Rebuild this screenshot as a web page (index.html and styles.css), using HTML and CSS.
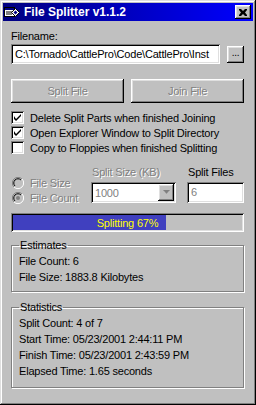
FILE: index.html
```html
<!DOCTYPE html>
<html lang="en">
<head>
  <meta charset="UTF-8" />
  <title>File Splitter</title>
  <link rel="stylesheet" href="styles.css">
</head>
<body>

<div class="window">
  <div class="titlebar">
    <svg class="app-icon" width="17" height="14" viewBox="0 0 17 14">
      <rect x="0.5" y="2.5" width="10" height="9" fill="#fff" stroke="#000"/>
      <rect x="1" y="3" width="9" height="2" fill="#000080"/>
      <path d="M2 7h6M2 9h6" stroke="#000"/>
      <path d="M11.5 3.5 L15.5 7.5 L11.5 11.5 L7.5 7.5 Z" fill="#fff" stroke="#000"/>
      <path d="M11.5 5.5 L13.5 7.5 L11.5 9.5 L9.5 7.5 Z" fill="#000080"/>
    </svg>
    <span class="title">File Splitter v1.1.2</span>
    <span class="close">
      <svg width="8" height="7" viewBox="0 0 8 7">
        <path d="M0 0h2l2 2 2-2h2v1l-2 2.5 2 2.5v1h-2l-2-2-2 2h-2v-1l2-2.5-2-2.5z" fill="#000"/>
      </svg>
    </span>
  </div>

  <div class="content">
    <div class="label">Filename:</div>
    <div class="file-row">
      <div class="field filename">C:\Tornado\CattlePro\Code\CattlePro\Inst</div>
      <span class="btn browse">...</span>
    </div>

    <div class="actions">
      <span class="btn big disabled">Split File</span>
      <span class="btn big disabled">Join File</span>
    </div>

    <div class="checks">
      <div class="check-row">
        <span class="checkbox"><svg width="7" height="7" viewBox="0 0 7 7"><path d="M0 2v3l2 2 5-5v-2l-5 5z" fill="#000"/></svg></span>
        Delete Split Parts when finished Joining
      </div>
      <div class="check-row">
        <span class="checkbox"><svg width="7" height="7" viewBox="0 0 7 7"><path d="M0 2v3l2 2 5-5v-2l-5 5z" fill="#000"/></svg></span>
        Open Explorer Window to Split Directory
      </div>
      <div class="check-row">
        <span class="checkbox"></span>
        Copy to Floppies when finished Splitting
      </div>
    </div>

    <div class="options">
      <div class="radios">
        <div class="radio-row disabled">
          <svg class="radio" width="12" height="12" viewBox="0 0 12 12">
            <path d="M10 2A5.5 5.5 0 0 0 2 10" stroke="#808080" fill="none"/>
            <path d="M2 10A5.5 5.5 0 0 0 10 2" stroke="#fff" fill="none"/>
            <circle cx="6" cy="6" r="4.5" fill="#c0c0c0"/>
            <path d="M9 3A4.2 4.2 0 0 0 3 9" stroke="#000" fill="none"/>
          </svg>
          File Size
        </div>
        <div class="radio-row disabled">
          <svg class="radio" width="12" height="12" viewBox="0 0 12 12">
            <path d="M10 2A5.5 5.5 0 0 0 2 10" stroke="#808080" fill="none"/>
            <path d="M2 10A5.5 5.5 0 0 0 10 2" stroke="#fff" fill="none"/>
            <circle cx="6" cy="6" r="4.5" fill="#c0c0c0"/>
            <path d="M9 3A4.2 4.2 0 0 0 3 9" stroke="#000" fill="none"/>
            <circle cx="6" cy="6" r="2" fill="#808080"/>
          </svg>
          File Count
        </div>
      </div>
      <div class="opt-col size-col">
        <div class="label disabled">Split Size (KB)</div>
        <div class="field combo">
          <span class="combo-text">1000</span>
          <span class="btn drop">
            <svg width="7" height="5" viewBox="0 0 7 5">
              <path d="M1 1h5l-2.5 3z" fill="#fff"/>
              <path d="M0 0h7l-3.5 4z" fill="#808080"/>
            </svg>
          </span>
        </div>
      </div>
      <div class="opt-col files-col">
        <div class="label">Split Files</div>
        <div class="field count">6</div>
      </div>
    </div>

    <div class="progress">
      <div class="progress-fill" style="width: 67%"></div>
      <span class="progress-text">Splitting 67%</span>
    </div>

    <fieldset class="group estimates">
      <legend>Estimates</legend>
      <div class="line">File Count: 6</div>
      <div class="line">File Size: 1883.8 Kilobytes</div>
    </fieldset>

    <fieldset class="group statistics">
      <legend>Statistics</legend>
      <div class="line">Split Count: 4 of 7</div>
      <div class="line">Start Time: 05/23/2001 2:44:11 PM</div>
      <div class="line">Finish Time: 05/23/2001 2:43:59 PM</div>
      <div class="line">Elapsed Time: 1.65 seconds</div>
    </fieldset>
  </div>
</div>

</body>
</html>
```

FILE: styles.css
```css
/* Reset */
* {
  box-sizing: border-box;
}
body {
  margin: 0;
  background: #c0c0c0;
  font-family: 'Liberation Sans', Arial, sans-serif;
  font-size: 11px;
  letter-spacing: -0.2px;
  color: #000;
}

.window {
  width: 256px;
  height: 405px;
  padding: 3px;
  background: #c0c0c0;
  box-shadow: inset -1px -1px #000, inset 1px 1px #dfdfdf,
              inset -2px -2px #808080, inset 2px 2px #fff;
  overflow: hidden;
}

/* Title bar */
.titlebar {
  height: 18px;
  display: flex;
  align-items: center;
  padding: 0 2px 0 1px;
  background: linear-gradient(90deg, #000080, #0000ff);
  color: #fff;
}
.app-icon {
  flex-shrink: 0;
  margin-right: 3px;
}
.title {
  flex: 1;
  font-weight: bold;
  font-size: 12px;
  letter-spacing: 0;
}
.close {
  width: 16px;
  height: 14px;
  display: flex;
  align-items: center;
  justify-content: center;
  background: #c0c0c0;
  box-shadow: inset -1px -1px #000, inset 1px 1px #fff,
              inset -2px -2px #808080, inset 2px 2px #dfdfdf;
}

/* Content */
.content {
  padding: 8px 9px 0 8px;
}
.label {
  line-height: 14px;
}
.disabled,
.btn.disabled {
  color: #808080;
  text-shadow: 1px 1px #fff;
}

.field {
  background: #fff;
  box-shadow: inset 1px 1px #808080, inset -1px -1px #fff,
              inset 2px 2px #000, inset -2px -2px #dfdfdf;
}

.btn {
  display: flex;
  align-items: center;
  justify-content: center;
  background: #c0c0c0;
  box-shadow: inset -1px -1px #000, inset 1px 1px #fff,
              inset -2px -2px #808080, inset 2px 2px #dfdfdf;
}

.file-row {
  display: flex;
  align-items: center;
  justify-content: space-between;
  margin-top: 1px;
}
.filename {
  width: 209px;
  height: 20px;
  padding: 3px 3px 0 4px;
  line-height: 14px;
  white-space: nowrap;
  overflow: hidden;
}
.browse {
  width: 17px;
  height: 17px;
  font-size: 10px;
  line-height: 1;
  padding-bottom: 3px;
}

.actions {
  display: grid;
  grid-template-columns: 1fr 1fr;
  gap: 7px;
  margin-top: 15px;
}
.btn.big {
  height: 24px;
}

.checks {
  margin-top: 7px;
}
.check-row {
  display: flex;
  align-items: center;
  height: 15px;
}
.checkbox {
  width: 13px;
  height: 13px;
  margin-right: 6px;
  display: flex;
  align-items: center;
  justify-content: center;
  background: #fff;
  box-shadow: inset 1px 1px #808080, inset -1px -1px #fff,
              inset 2px 2px #000, inset -2px -2px #dfdfdf;
}

.options {
  display: flex;
  margin-top: 10px;
}
.radios {
  width: 80px;
  padding-top: 10px;
}
.radio-row {
  display: flex;
  align-items: center;
  height: 15px;
  padding-left: 1px;
}
.radio {
  margin-right: 6px;
}
.opt-col .label {
  padding-left: 1px;
  margin-bottom: 3px;
}
.size-col {
  width: 85px;
}
.files-col {
  width: 57px;
  margin-left: 11px;
}
.combo {
  height: 21px;
  display: flex;
  align-items: center;
  padding: 2px;
}
.combo-text {
  flex: 1;
  padding-left: 2px;
  color: #808080;
}
.drop {
  width: 16px;
  height: 17px;
}
.count {
  height: 21px;
  padding: 3px 4px 0 4px;
  line-height: 14px;
  color: #808080;
}

/* Progress */
.progress {
  position: relative;
  height: 19px;
  margin-top: 8px;
  padding: 2px;
  background: #c0c0c0;
  box-shadow: inset 1px 1px #808080, inset -1px -1px #fff,
              inset 2px 2px #000, inset -2px -2px #dfdfdf;
}
.progress-fill {
  height: 100%;
  background: #4040bf;
}
.progress-text {
  position: absolute;
  inset: 0;
  display: flex;
  align-items: center;
  justify-content: center;
  color: #ffff00;
}

/* Group boxes */
.group {
  margin: 6px 0 0 0;
  padding: 1px 7px 6px 7px;
  border: 1px solid #808080;
  box-shadow: inset 1px 1px #fff, 1px 1px #fff;
}
.group legend {
  padding: 0 1px;
  margin-left: 0;
  line-height: 14px;
}
.statistics {
  margin-top: 8px;
  padding-bottom: 8px;
}
.line {
  line-height: 16px;
}
```
